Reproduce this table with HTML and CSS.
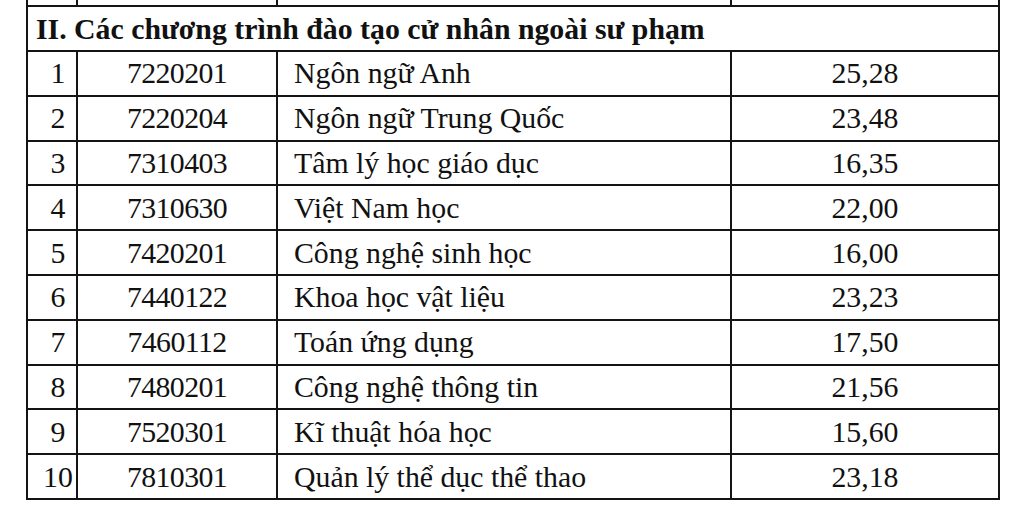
FILE: index.html
```html
<!DOCTYPE html>
<html lang="vi">
<head>
<meta charset="utf-8">
<title>Các chương trình đào tạo cử nhân ngoài sư phạm</title>
<link rel="stylesheet" href="styles.css">
</head>
<body>
<table class="score-table">
  <colgroup>
    <col class="c-stt">
    <col class="c-code">
    <col class="c-name">
    <col class="c-score">
  </colgroup>
  <tbody>
    <tr class="row-prev"><td></td><td></td><td></td><td></td></tr>
    <tr class="row-section"><td colspan="4">II. Các chương trình đào tạo cử nhân ngoài sư phạm</td></tr>
    <tr><td class="stt">1</td><td class="code">7220201</td><td class="name">Ngôn ngữ Anh</td><td class="score">25,28</td></tr>
    <tr><td class="stt">2</td><td class="code">7220204</td><td class="name">Ngôn ngữ Trung Quốc</td><td class="score">23,48</td></tr>
    <tr><td class="stt">3</td><td class="code">7310403</td><td class="name">Tâm lý học giáo dục</td><td class="score">16,35</td></tr>
    <tr><td class="stt">4</td><td class="code">7310630</td><td class="name">Việt Nam học</td><td class="score">22,00</td></tr>
    <tr><td class="stt">5</td><td class="code">7420201</td><td class="name">Công nghệ sinh học</td><td class="score">16,00</td></tr>
    <tr><td class="stt">6</td><td class="code">7440122</td><td class="name">Khoa học vật liệu</td><td class="score">23,23</td></tr>
    <tr><td class="stt">7</td><td class="code">7460112</td><td class="name">Toán ứng dụng</td><td class="score">17,50</td></tr>
    <tr><td class="stt">8</td><td class="code">7480201</td><td class="name">Công nghệ thông tin</td><td class="score">21,56</td></tr>
    <tr><td class="stt">9</td><td class="code">7520301</td><td class="name">Kĩ thuật hóa học</td><td class="score">15,60</td></tr>
    <tr><td class="stt">10</td><td class="code">7810301</td><td class="name">Quản lý thể dục thể thao</td><td class="score">23,18</td></tr>
  </tbody>
</table>
</body>
</html>
```
FILE: styles.css
```css
html, body {
  margin: 0;
  padding: 0;
  background: #ffffff;
}

body {
  font-family: "Liberation Serif", "Times New Roman", serif;
  font-size: 29.8px;
  color: #111111;
  overflow: hidden;
}

.score-table {
  border-collapse: collapse;
  table-layout: fixed;
  width: 974px;
  margin: -40px 0 0 26px;
}

.c-stt { width: 50px; }
.c-code { width: 200px; }
.c-name { width: 454px; }
.c-score { width: 268px; }

.score-table td {
  border: 2px solid #141414;
  padding: 0;
  height: 42.8px;
  line-height: 32px;
  vertical-align: middle;
  white-space: nowrap;
  overflow: hidden;
}

.row-prev td {
  height: 43px;
}

.row-section td {
  font-weight: bold;
  padding-left: 8px;
  height: 43px;
}

.stt {
  text-align: center;
  padding-left: 12px !important;
}

.code {
  text-align: center;
  letter-spacing: -0.6px;
}

.name {
  padding-left: 16px !important;
}

.score {
  text-align: center;
}
```
